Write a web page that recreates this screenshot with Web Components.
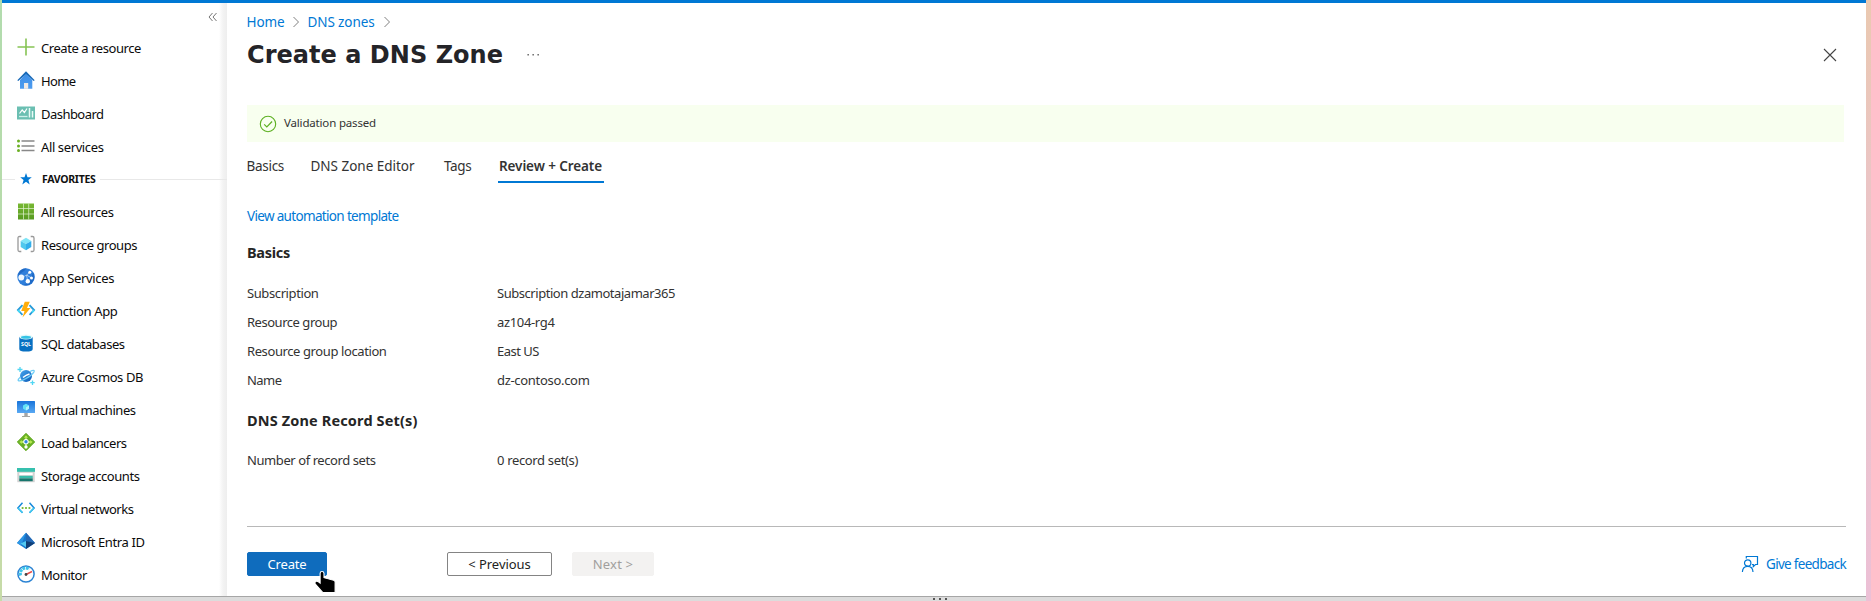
<!DOCTYPE html>
<html lang="en"><head><meta charset="utf-8"><title>Create a DNS Zone</title>
<style>html,body{margin:0;height:100%;overflow:hidden}body{font-family:"Noto Sans","Open Sans",sans-serif;background:#fff}</style></head>
<body><portal-app></portal-app>
<script>
const def=(name,html,fn)=>customElements.define(name,class extends HTMLElement{
  constructor(){super();this.attachShadow({mode:'open'});this.shadowRoot.innerHTML=html}
  connectedCallback(){fn&&fn.call(this,this.shadowRoot)}
});

const ICONS={
plus:'<path d="M9 .5v17M.5 9h17" stroke="#86c454" stroke-width="1.6"/>',
home:'<defs><linearGradient id="g" x2="0" y2="1"><stop stop-color="#3d8ee6"/><stop offset="1" stop-color="#4d9cf0"/></linearGradient></defs><path d="M3 9 9 2.5 15.3 9v8.8H3z" fill="url(#g)"/><path d="M.3 9.2 9 .3l8.7 8.9-1 .8L9 3 1.3 10z" fill="#1769b8"/><path d="M7 12h4.200v5.800H7z" fill="#efe9e4"/>',
dash:'<rect y="2.500" width="18" height="13" fill="#6bbfb2"/><path d="M2.500 9.500 5.200 6l2.200 2.500L10 4.500" fill="none" stroke="#fff" stroke-width="1.200"/><path d="M2 12.500h8.500" stroke="#cdf0ea" stroke-width="1.300"/><path d="M12.500 4v9.500M15.500 7v6.500" stroke="#e9fbf7" stroke-width="1.500"/>',
list:'<g fill="#6aaf22"><circle cx="1.500" cy="4" r="1.500"/><circle cx="1.500" cy="9" r="1.500"/><circle cx="1.500" cy="13.500" r="1.500"/></g><path d="M4.500 4H17.500M4.500 9H17.500M4.500 13.500H17.500" stroke="#888" stroke-width="1.300"/>',
star:'<path d="M9 3l1.500 4.200h4.300l-3.400 2.700 1.300 4.500L9 11.800l-3.700 2.600 1.300-4.500-3.400-2.700h4.300z" fill="#0078d4"/>',
grid:'<defs><linearGradient id="g" x2="0" y2="1" ><stop stop-color="#78b833"/><stop offset="1" stop-color="#579a20"/></linearGradient></defs><path d="M1 1.500h16v16H1z" fill="url(#g)"/><path d="M6.500 1.500v16M11.700 1.500v16M1 6.500h16M1 12h16" stroke="#e4f3d4" stroke-width=".700"/>',
rg:'<path d="M4.300 1.500H2.500Q1 1.500 1 3v12q0 1.500 1.500 1.500h1.800M13.700 1.500h1.800Q17 1.500 17 3v12q0 1.500-1.500 1.500h-1.800" fill="none" stroke="#999" stroke-width="1.300"/><path d="M9 2.800 14.300 6 9 9 3.700 6z" fill="#7fe5f7"/><path d="M3.700 6 9 9v6.200l-5.300-3.100z" fill="#50c8ed"/><path d="M14.300 6 9 9v6.200l5.300-3.100z" fill="#32aeea"/>',
app:'<circle cx="9" cy="9" r="8.700" fill="#2f7fdb"/><path d="M1.500 5Q4 0 9.500.3q-2 3-5 4.500T1 11zM16 4q3 5 0 9.500Q12 19 6 17q7-1 10-13" fill="#1861bd" opacity=".7"/><path d="M4.800 9.800 9.500 7l4-3M9.500 7l1.200 6M9.500 7l5 3" stroke="#b8dcff" stroke-width=".800"/><circle cx="4.300" cy="9.500" r="2.900" fill="#eff8ff"/><circle cx="12.800" cy="4.200" r="1.500" fill="#fff"/><circle cx="14.500" cy="10" r="1.500" fill="#fff"/><circle cx="10.800" cy="13.300" r="2.200" fill="#fff"/>',
fn:'<path d="M5.500 4.200.9 9.100l4.600 4.700" fill="none" stroke="#269bd9" stroke-width="1.800"/><path d="M12.500 4.200 17.100 9.100l-4.600 4.700" fill="none" stroke="#269bd9" stroke-width="1.800"/><path d="M.9 9.100 3 11.500M17.100 9.100 15 11.500" stroke="#42d9f5" stroke-width="1.800"/><path d="M7.800.8h5L10 7h3.500L5.500 16.500l2-6.500H4.200z" fill="#ffad0a"/>',
sql:'<path d="M2.300 3v12q0 2.600 6.700 2.600t6.700-2.600V3z" fill="#0870c2"/><ellipse cx="9" cy="3" rx="6.700" ry="2.400" fill="#e5f8fb"/><ellipse cx="9" cy="3.200" rx="5" ry="1.500" fill="#36c3e5"/><text x="9" y="11.800" font-family="Noto Sans" font-weight="700" font-size="5.200" fill="#fff" text-anchor="middle">SQL</text>',
cosmos:'<defs><linearGradient id="g" x1="0" y1="0" x2="1" y2="1"><stop stop-color="#48a6ef"/><stop offset="1" stop-color="#0c59b5"/></linearGradient></defs><circle cx="9" cy="9" r="6" fill="url(#g)"/><path d="M13 4.500q5-2.500 4 .3Q15 8 9 11.500T1.200 13.500Q1 12 3.500 10" fill="none" stroke="#6fcdf6" stroke-width="1.300"/><path d="M6 10.500Q9 8 12.500 7" stroke="#fff" stroke-width="1.600" fill="none"/><path d="M3 0v5M.5 2.500h5M15.500 13.500v4.400M13.300 15.700h4.400" stroke="#50d6f3" stroke-width="1.300"/>',
vm:'<defs><linearGradient id="g" x2="0" y2="1"><stop stop-color="#1874da"/><stop offset="1" stop-color="#59a9f3"/></linearGradient></defs><rect y="1" width="18" height="12" rx=".5" fill="url(#g)"/><path d="M9 3.700 12 5.500v3.300l-3 1.800-3-1.800V5.500z" fill="#62e1f6"/><path d="M9 7.200 12 5.500v3.300l-3 1.800z" fill="#b2f2fc"/><path d="M7.300 13h3.400v3h2.300v1H5v-1h2.300z" fill="#a6a6a6"/>',
lb:'<path d="M9 .3 17.700 9 9 17.700.3 9z" fill="#67ae24" stroke="#67ae24" stroke-linejoin="round"/><path d="M9 9v5.500M9 9 4 9M9 9h5M9 7V3.500" stroke="#c9f27a" stroke-width="1.300"/><path d="M9 2.200l2.100 2.500H6.900zM2.300 9l2.500-2.100v4.200zM15.700 9l-2.500-2.100v4.200z" fill="#b7e94f"/><circle cx="9" cy="14" r="1.700" fill="#fff"/><circle cx="9" cy="8.800" r="2.700" fill="#fff"/><circle cx="9" cy="8.800" r="1.700" fill="#3185dd"/>',
storage:'<path d="M.3 4.500h17.400v11.700H.3z" fill="#d2d2d2"/><path d="M0 2h18v3.800H0z" fill="#36c0ae"/><path d="M2.300 6.800h13.400v2.400H2.300z" fill="#fff"/><path d="M2.300 9.800h13.400v2.600H2.300z" fill="#37bba9"/><path d="M2.300 12.400h13.400v2.800H2.300z" fill="#17766d"/>',
vnet:'<path d="M5.500 3.800.9 9l4.600 4.800M12.500 3.800 17.100 9l-4.600 4.800" fill="none" stroke="#1689db" stroke-width="1.500"/><path d="M.9 9l4.600 4.800M17.100 9l-4.600 4.800" stroke="#40c9ef" stroke-width="1.500"/><g fill="#72b82d"><circle cx="5.600" cy="9" r="1.100"/><circle cx="9" cy="9" r="1.100"/><circle cx="12.400" cy="9" r="1.100"/></g>',
entra:'<path d="M9 .8 18 11 9 17 0 11z" fill="#1679cf"/><path d="M9 .8 0 11l4 2.500z" fill="#2d97e5"/><path d="M9 .8 18 11l-9-2z" fill="#2468b4"/><path d="M9 9 3.500 11.500 9 15.200z" fill="#52c9f2"/><path d="M9 9l9 2-9 6z" fill="#123f77"/>',
monitor:'<circle cx="9" cy="9" r="8.100" fill="#fff" stroke="#2b83d3" stroke-width="1.500"/><path d="M3.600 10.500a5.600 5.600 0 0 1 8.800-6.200" fill="none" stroke="#40c5ea" stroke-width="3" stroke-dasharray="2.800 .7"/><path d="M9 9.500 15 6.500" stroke="#e74b48" stroke-width="1.500"/><circle cx="9" cy="9.500" r="1.400" fill="#444"/>',
check:'<circle cx="9" cy="9" r="7.700" fill="none" stroke="#5db022" stroke-width="1.100"/><path d="M5.200 9.300l2.600 2.600 5.300-5.400" fill="none" stroke="#5db022" stroke-width="1.200"/>',
feedback:'<path d="M5.300 3.500V1.500H16.500V9.500H14.500L12.300 11.600V9.500H11" fill="none" stroke="#0078d4" stroke-width="1.200"/><circle cx="6.700" cy="8" r="3.200" fill="none" stroke="#0078d4" stroke-width="1.200"/><path d="M1.400 17q.3-5.600 5.300-5.600T12 17" fill="none" stroke="#0078d4" stroke-width="1.200"/>',
close:'<path d="M3 3 15 15M15 3 3 15" stroke="#444" stroke-width="1.100"/>',
chev:'<path d="M6.500 4 11.500 9l-5 5" fill="none" stroke="#808080"/>',
collapse:'<path d="M8.500 5 5 9l3.500 4M12.500 5 9 9l3.500 4" fill="none" stroke="#777"/>',
dots:'<g fill="#555"><rect x="2.500" y="8" width="1.300" height="1.500"/><rect x="7.500" y="8" width="1.300" height="1.500"/><rect x="12.500" y="8" width="1.300" height="1.500"/></g>',
hand:'<path d="M5.500 9V2.200Q5.500.5 7.200.5T9 2.200V6l8.700 2.300q1.300.4 1.300 1.700v9.500H8L1.200 11.800q-1-1.600.6-2.500 1.500-.6 3.700 1.500z" fill="#000" stroke="#fff"/>'
};
def('svg-icon','<style>:host{display:block;width:18px;height:18px;flex:none}svg{display:block;width:100%;height:100%;overflow:visible}</style><svg viewBox="0 0 18 18"></svg>',function(r){
  r.querySelector('svg').innerHTML=ICONS[this.getAttribute('name')];
});
/* Label whose tracking adapts to a given advance width. */
def('fit-text','<style>:host{display:inline-block;white-space:nowrap;font-kerning:normal}</style><slot></slot>',function(){
  const w=+this.getAttribute('w'),n=this.textContent.length;
  const c=document.createElement('canvas').getContext('2d'),s=getComputedStyle(this);
  c.font=`${s.fontWeight} ${s.fontSize} ${s.fontFamily}`;
  this.style.width=w+'px';
  this.style.letterSpacing=((w-c.measureText(this.textContent).width)/n).toFixed(3)+'px';
});
def('nav-item','<style>:host{display:flex;height:33px;align-items:center;padding-left:15px;color:#0b0b0b;font-size:13px;line-height:18px}svg-icon{margin-right:6px;margin-top:-1px}</style><svg-icon></svg-icon><slot></slot>',function(r){
  const i=r.querySelector('svg-icon'),n=document.createElement('svg-icon');n.setAttribute('name',this.getAttribute('icon'));i.replaceWith(n);
});
def('nav-heading','<style>:host{display:flex;height:32px;align-items:center;font-size:10.500px;font-weight:700;color:#111}i{height:1px;background:#e8e8e8}.a{width:13px;margin-right:2px}.b{flex:1;margin-left:4px}svg-icon{margin-right:7px}</style><i class="a"></i><svg-icon name="star"></svg-icon><slot></slot><i class="b"></i>');
const nav=[['plus','Create a resource',100],['home','Home',34.500],['dash','Dashboard',62.500],['list','All services',62.500],0,['grid','All resources',72.500],['rg','Resource groups',96],['app','App Services',73],['fn','Function App',76.500],['sql','SQL databases',83.500],['cosmos','Azure Cosmos DB',102],['vm','Virtual machines',94.500],['lb','Load balancers',85.500],['storage','Storage accounts',98.500],['vnet','Virtual networks',92.500],['entra','Microsoft Entra ID',103.500],['monitor','Monitor',46]];
def('side-nav',`<style>:host{display:block;width:225px;flex:none;background:linear-gradient(90deg,#fff 0 217px,#f3f3f3 221px,#eee 225px)}header{height:28px;display:flex;justify-content:flex-end;align-items:center;padding:0 5px 0 0;box-sizing:border-box}</style><header><svg-icon name="collapse"></svg-icon></header>`+nav.map(n=>n?`<nav-item icon="${n[0]}"><fit-text w="${n[2]}">${n[1]}</fit-text></nav-item>`:'<nav-heading><fit-text w="53.500">FAVORITES</fit-text></nav-heading>').join(''));
def('bread-crumb',`<style>:host{display:flex;height:20px;align-items:center;font-size:13.500px;line-height:20px;color:#0078d4;margin-left:-.5px}svg-icon{margin:-1px 3px 0 2px}</style><fit-text w="38">Home</fit-text><svg-icon name="chev"></svg-icon><fit-text w="67">DNS zones</fit-text><svg-icon name="chev" style="margin-left:3px"></svg-icon>`);
def('page-title',`<style>:host{display:flex;height:30px;align-items:center;font:700 24px/30px "DejaVu Sans",sans-serif;color:#242428}.dots{margin-left:22px}.x{margin-left:auto;margin-right:7px}</style><fit-text w="256">Create a DNS Zone</fit-text><svg-icon class="dots" name="dots"></svg-icon><svg-icon class="x" name="close"></svg-icon>`);
def('status-bar',`<style>:host{display:flex;height:37px;background:#f8ffef;align-items:center;font-size:11.500px;color:#333;padding-left:12px;line-height:16px}svg-icon{margin-right:7px}fit-text{margin-top:-2px}::slotted(*){margin-top:-2px}</style><svg-icon name="check"></svg-icon><slot></slot>`);
def('tab-list',`<style>:host{display:flex;font-size:13.500px;line-height:20px;color:#333;height:27px;margin-left:-.5px}b{display:block;font-weight:600;box-sizing:border-box;border-bottom:2px solid #0078d4;height:27px;width:106px;padding-left:1px;margin-left:26.500px}</style><fit-text w="37.500">Basics</fit-text><fit-text w="104" style="margin-left:26.500px">DNS Zone Editor</fit-text><fit-text w="27.500" style="margin-left:29.500px">Tags</fit-text><b><fit-text w="103">Review + Create</fit-text></b>`);
def('info-row',`<style>:host{display:flex;height:29px;align-items:center;font-size:13px;line-height:18px;color:#333}div{width:250px}::slotted(*){display:inline-block}</style><div><slot name="key"></slot></div><slot></slot>`);
def('section-title','<style>:host{display:flex;font-size:14.500px;line-height:20px;font-weight:700;color:#252525}</style><slot></slot>');
def('ui-button',`<style>:host{display:flex;box-sizing:border-box;height:24px;align-items:center;justify-content:center;font-size:13px;line-height:18px;border:1px solid #848484;border-radius:2px;color:#222;background:#fff;width:105px}:host([primary]){background:#0f6cbd;border-color:#0f6cbd;color:#fff;width:80px}:host([disabled]){background:#f3f2f1;border-color:#f3f2f1;color:#a19f9d;width:82px}</style><slot></slot>`);
const row=(k,kw,v,vw)=>`<info-row><fit-text slot="key" w="${kw}">${k}</fit-text><fit-text w="${vw}">${v}</fit-text></info-row>`;
def('page-main',`<style>:host{display:flex;flex-direction:column;flex:1;padding:9px 20px 0;min-width:0;box-sizing:border-box}page-title{margin-top:8px}
status-bar{margin:35px 2px 0 0}tab-list{margin-top:14px}.link{display:flex;color:#0078d4;font-size:13.500px;line-height:20px;margin-top:23px}.t1{margin-top:16px}.rows{margin-top:16px}.t2{margin-top:16px}.r2{margin-top:15px}
hr{height:1px;border:0;background:#b8b8b8;margin:52px 0 25px;width:100%}footer{display:flex;align-items:center;position:relative}.p{margin-left:120px}.n{margin-left:20px}.fb{margin-left:auto;display:flex;align-items:center;color:#0078d4;font-size:13.500px;line-height:18px;gap:7px}.hand{position:absolute;left:67px;top:19px;width:20px;height:20px}</style>
<bread-crumb></bread-crumb><page-title></page-title>
<status-bar><fit-text w="92">Validation passed</fit-text></status-bar><tab-list></tab-list>
<div class="link"><fit-text w="151.500">View automation template</fit-text></div>
<section-title class="t1"><fit-text w="43">Basics</fit-text></section-title>
<div class="rows">${row('Subscription',71.500,'Subscription dzamotajamar365',178)}${row('Resource group',90,'az104-rg4',57.500)}${row('Resource group location',139.500,'East US',42)}${row('Name',34.500,'dz-contoso.com',92.500)}</div>
<section-title class="t2"><fit-text w="170.500">DNS Zone Record Set(s)</fit-text></section-title>
<div class="rows r2">${row('Number of record sets',128.500,'0 record set(s)',81)}</div>
<hr><footer><ui-button primary><fit-text w="39">Create</fit-text></ui-button><ui-button class="p"><fit-text w="62.500">&lt; Previous</fit-text></ui-button><ui-button class="n" disabled><fit-text w="40.500">Next &gt;</fit-text></ui-button><div class="fb"><svg-icon name="feedback"></svg-icon><fit-text w="80">Give feedback</fit-text></div><svg-icon class="hand" name="hand"></svg-icon></footer>`);
def('portal-app',`<style>:host{display:grid;grid-template-columns:2px 1fr 5px;height:601px}.l{background:linear-gradient(#b2dcae,#b9dba9 50%,#c7dba8)}.r{background:linear-gradient(#eac9b0,#ebc5c5 30%,#ecc0d6)}main{display:flex;flex-direction:column;background:#fff;min-width:0}.top{height:3px;background:#0078d4}.body{display:flex;height:593px}.bottom{border-top:1px solid #a6a6a6;box-sizing:border-box;background:#dcdcdc;display:flex;justify-content:center;gap:4px;padding:1px 0 0 11px;height:5px}.bottom i{width:2px;height:2px;background:#555}</style><div class="l"></div><main><div class="top"></div><div class="body"><side-nav></side-nav><page-main></page-main></div><div class="bottom"><i></i><i></i><i></i></div></main><div class="r"></div>`);
</script></body></html>
